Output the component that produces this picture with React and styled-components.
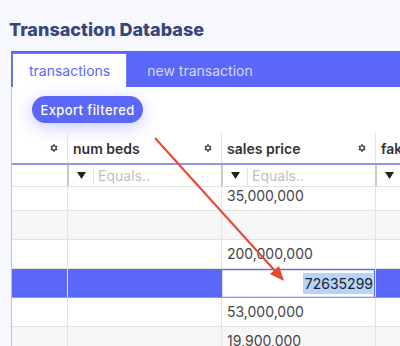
import React from 'react'
import styled, { createGlobalStyle } from 'styled-components'

const GlobalStyle = createGlobalStyle`
  html, body {
    margin: 0;
    padding: 0;
    overflow: hidden;
    background: #f7f8fe;
    font-family: 'Inter', 'Noto Sans', sans-serif;
  }
`

const Page = styled.div`
  position: relative;
  width: 400px;
  height: 346px;
  overflow: hidden;
`

const Title = styled.h1`
  margin: 0;
  padding: 18px 0 0 9px;
  height: 24px;
  line-height: 24px;
  font-size: 18px;
  font-weight: 800;
  color: #38477b;
  white-space: nowrap;
`

const Panel = styled.div`
  margin: 9px 0 0 11px;
  width: 420px;
`

const TabBar = styled.div`
  display: flex;
  align-items: flex-end;
  gap: 4px;
  height: 36px;
  padding-left: 1px;
  background: #5b67f6;
`

const Tab = styled.div`
  box-sizing: border-box;
  height: 34px;
  display: flex;
  align-items: center;
  padding: 0 ${p => (p.$active ? 16 : 15)}px;
  font-size: 14px;
  color: ${p => (p.$active ? '#5b67f6' : '#d4d8ff')};
  background: ${p => (p.$active ? '#fff' : 'transparent')};
  border: 1px solid ${p => (p.$active ? '#6e79f3' : 'transparent')};
  border-bottom: none;
  white-space: nowrap;
`

const Content = styled.div`
  background: #fff;
  border-left: 1px solid #c4c4c8;
  padding-top: 9px;
`

const ExportButton = styled.button`
  margin-left: 20px;
  height: 27px;
  width: 111px;
  border: none;
  border-radius: 14px;
  background: #5b67f6;
  color: #fff;
  font-family: inherit;
  font-size: 13px;
  font-weight: 500;
  letter-spacing: 0.4px;
  box-shadow: 0 4px 18px rgba(91, 103, 246, 0.35);
`

const Grid = styled.div`
  margin-top: 10px;
`

const Row = styled.div`
  display: grid;
  grid-template-columns: 55px 154px 154px 154px;
  height: ${p => p.$h}px;
  box-sizing: border-box;
  background: ${p => p.$bg || '#fff'};
  border-bottom: ${p => p.$line || '1px solid #e3e3e3'};
`

const HeadCell = styled.div`
  display: flex;
  align-items: center;
  justify-content: space-between;
  padding: 0 8px 0 5px;
  border-left: ${p => (p.$first ? 'none' : '1px solid #e4e4e4')};
  font-size: 14px;
  font-weight: 600;
  color: #333;
  white-space: nowrap;
  overflow: hidden;
`

const FilterCell = styled.div`
  display: flex;
  align-items: center;
  padding-left: 8px;
  border-left: ${p => (p.$first ? 'none' : '2px solid #c9c9c9')};
  font-size: 14px;
  color: #c0c0c0;
  white-space: nowrap;
  overflow: hidden;
`

const FilterDivider = styled.span`
  width: 1px;
  height: 18px;
  background: #e2e2e2;
  margin: 0 4px 0 7px;
`

const BodyWindow = styled.div`
  height: 160px;
  overflow: hidden;
`

const BodyInner = styled.div`
  margin-top: -5px;
`

const Cell = styled.div`
  display: flex;
  align-items: center;
  padding-left: 5px;
  padding-bottom: 1px;
  border-left: ${p => (p.$first ? 'none' : '1px solid #e3e3e3')};
  font-size: 14px;
  color: #454545;
  white-space: nowrap;
`

const EditCell = styled.div`
  display: flex;
  align-items: center;
  justify-content: flex-end;
  margin: 1px 1px 0 1px;
  background: #fff;
  border: 1px solid #d8dbff;
  font-size: 14px;
  color: #222;
`

const Selected = styled.span`
  background: #b4d4fd;
  padding: 2px 0 2px 2px;
`

const Arrow = styled.svg`
  position: absolute;
  left: 0;
  top: 0;
  pointer-events: none;
`

const Gear = () => (
  <svg width="10" height="10" viewBox="0 0 24 24" fill="#444">
    <path d="M19.4 13a7.5 7.5 0 0 0 0-2l2.1-1.6-2-3.5-2.5 1a7.6 7.6 0 0 0-1.7-1L15 3h-4l-.4 2.9a7.6 7.6 0 0 0-1.7 1l-2.5-1-2 3.5L6.5 11a7.5 7.5 0 0 0 0 2l-2.1 1.6 2 3.5 2.5-1a7.6 7.6 0 0 0 1.7 1L11 21h4l.4-2.9a7.6 7.6 0 0 0 1.7-1l2.5 1 2-3.5zM13 15.5a3.5 3.5 0 1 1 0-7 3.5 3.5 0 0 1 0 7z" transform="translate(-1 0)" />
  </svg>
)

const FilterIcon = () => (
  <svg width="9" height="7" viewBox="0 0 9 7">
    <polygon points="0,0 9,0 4.5,7" fill="#222" />
  </svg>
)

const rows = [
  { price: '35,000,000' },
  { price: '', bg: '#f7f7f7' },
  { price: '200,000,000' },
  { edit: '72635299' },
  { price: '53,000,000' },
  { price: '19,900,000', bg: '#f7f7f7' },
]

const App = () => (
  <Page>
    <GlobalStyle />
    <Title>Transaction Database</Title>
    <Panel>
      <TabBar>
        <Tab $active>transactions</Tab>
        <Tab>new transaction</Tab>
      </TabBar>
      <Content>
        <ExportButton>Export filtered</ExportButton>
        <Grid>
          <Row $h={32} $line="2px solid #8f97f2">
            <HeadCell $first><span /><Gear /></HeadCell>
            <HeadCell>num beds<Gear /></HeadCell>
            <HeadCell>sales price<Gear /></HeadCell>
            <HeadCell>fake</HeadCell>
          </Row>
          <Row $h={22}>
            <FilterCell $first />
            <FilterCell><FilterIcon /><FilterDivider />Equals..</FilterCell>
            <FilterCell><FilterIcon /><FilterDivider />Equals..</FilterCell>
            <FilterCell><FilterIcon /><FilterDivider />Equals..</FilterCell>
          </Row>
          <BodyWindow>
            <BodyInner>
              {rows.map((r, i) =>
                r.edit ? (
                  <Row key={i} $h={29} $bg="#5b67f6" $line="1px solid #8f97f2">
                    <Cell $first />
                    <Cell />
                    <EditCell><Selected>{r.edit}</Selected></EditCell>
                    <Cell />
                  </Row>
                ) : (
                  <Row key={i} $h={29} $bg={r.bg}>
                    <Cell $first />
                    <Cell />
                    <Cell>{r.price}</Cell>
                    <Cell />
                  </Row>
                )
              )}
            </BodyInner>
          </BodyWindow>
        </Grid>
      </Content>
    </Panel>
    <Arrow width="400" height="346">
      <line x1="155" y1="138" x2="276" y2="272" stroke="#e8472c" strokeWidth="2" />
      <polygon points="284,281 270,274 279,266" fill="#e8472c" />
    </Arrow>
  </Page>
)

export default App
